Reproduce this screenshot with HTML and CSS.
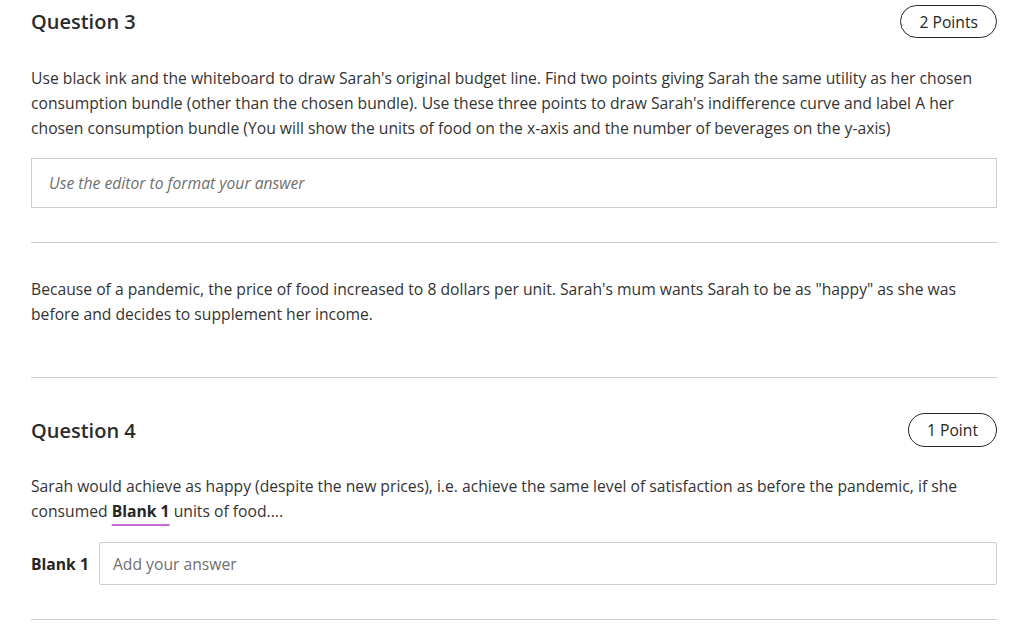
FILE: index.html
```html
<!DOCTYPE html>
<html>
<head>
<meta charset="utf-8">
<link rel="stylesheet" href="styles.css">
</head>
<body>
<div class="page">
  <section class="question">
    <div class="q-head">
      <h2 class="q-title">Question 3</h2>
      <span class="pill">2 Points</span>
    </div>
    <p class="q-text">Use black ink and the whiteboard to draw Sarah's original budget line. Find two points giving Sarah the same utility as her chosen consumption bundle (other than the chosen bundle). Use these three points to draw Sarah's indifference curve and label A her chosen consumption bundle (You will show the units of food on the x-axis and the number of beverages on the y-axis)</p>
    <div class="editor">Use the editor to format your answer</div>
  </section>
  <hr class="rule rule-a">
  <p class="q-text info">Because of a pandemic, the price of food increased to 8 dollars per unit. Sarah's mum wants Sarah to be as "happy" as she was before and decides to supplement her income.</p>
  <hr class="rule rule-b">
  <section class="question q4">
    <div class="q-head q4-head">
      <h2 class="q-title">Question 4</h2>
      <span class="pill">1 Point</span>
    </div>
    <p class="q-text q4-text">Sarah would achieve as happy (despite the new prices), i.e. achieve the same level of satisfaction as before the pandemic, if she consumed <span class="blank">Blank 1</span> units of food....</p>
    <div class="blank-row">
      <span class="blank-label">Blank 1</span>
      <div class="answer">Add your answer</div>
    </div>
  </section>
  <hr class="rule rule-c">
</div>
</body>
</html>
```

FILE: styles.css
```css
* { box-sizing: border-box; }
html, body { margin: 0; padding: 0; background: #fff; }
body {
  font-family: "Open Sans", "Noto Sans", sans-serif;
  color: #333;
  font-size: 15.7px;
}
.page {
  padding: 5px 20px 0 31px;
}
.q-head {
  display: flex;
  justify-content: space-between;
  align-items: center;
  height: 33px;
}
.q4-head { height: 34px; }
.q-title {
  margin: 0;
  font-size: 20px;
  font-weight: 600;
  color: #2b2b2b;
}
.pill {
  border: 1px solid #262626;
  border-radius: 17px;
  height: 100%;
  padding: 0 18px;
  display: flex;
  align-items: center;
  font-size: 15.7px;
  color: #262626;
}
.q-text {
  margin: 28px 0 0;
  line-height: 25px;
  font-size: 15.7px;
  color: #333;
}
.editor {
  margin-top: 17px;
  height: 50px;
  border: 1px solid #cdcdcd;
  padding-left: 17px;
  display: flex;
  align-items: center;
  font-style: italic;
  color: #6f6f6f;
  font-size: 15.7px;
}
.rule {
  border: 0;
  border-top: 1px solid #cdcdcd;
  margin: 0;
}
.rule-a { margin-top: 34px; }
.info { margin-top: 34px; }
.rule-b { margin-top: 50px; }
.q4 { margin-top: 35px; }
.q4-text { margin-top: 27px; }
.blank {
  font-weight: 700;
  color: #262626;
  text-decoration: underline;
  text-decoration-color: #c66bd8;
  text-decoration-thickness: 2px;
  text-underline-offset: 7px;
}
.blank-row {
  margin-top: 18px;
  display: flex;
  align-items: center;
  gap: 10px;
}
.blank-label {
  font-weight: 700;
  color: #262626;
  font-size: 15.7px;
}
.answer {
  flex: 1;
  height: 43px;
  border: 1px solid #cdcdcd;
  border-radius: 2px;
  padding-left: 13px;
  display: flex;
  align-items: center;
  color: #6f6f6f;
  font-size: 15.7px;
}
.rule-c { margin-top: 34px; }
```
